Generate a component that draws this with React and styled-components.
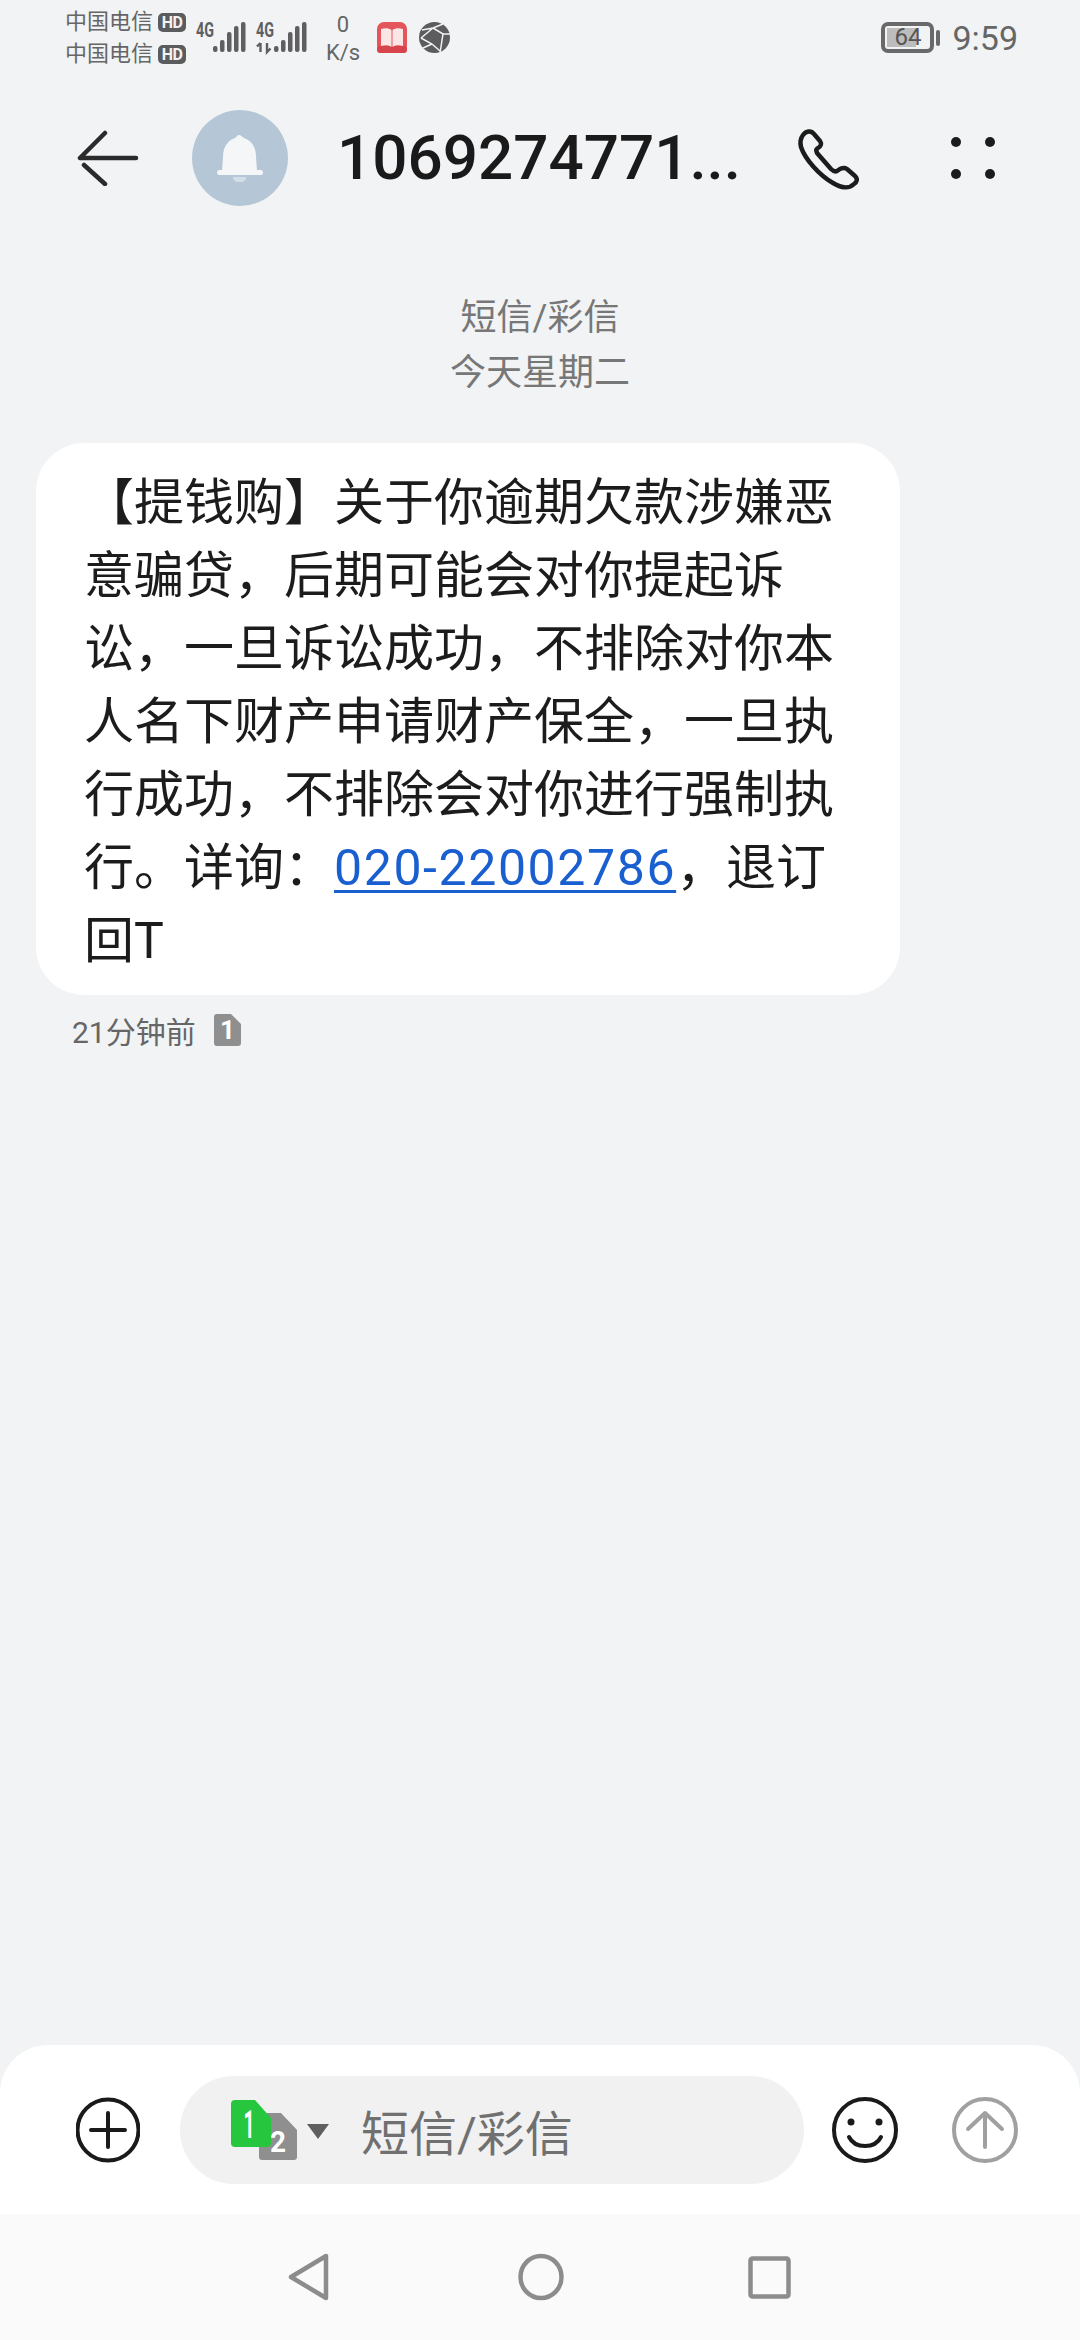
import React from 'react'
import styled, { createGlobalStyle } from 'styled-components'

const GlobalStyle = createGlobalStyle`
  html, body { margin: 0; padding: 0; background: #f1f3f5; }
  * { box-sizing: border-box; }
`

const Screen = styled.div`
  width: 1080px;
  height: 2340px;
  display: flex;
  flex-direction: column;
  background: #f1f3f5;
  font-family: Roboto, "Noto Sans CJK SC", sans-serif;
  overflow: hidden;
`

const StatusBar = styled.div`
  height: 76px;
  flex: none;
  display: flex;
  align-items: flex-start;
  padding-left: 65px;
  color: #666;
`

const Carriers = styled.div`
  width: 131px;
  padding-top: 6px;
  display: flex;
  flex-direction: column;
`

const CarrierRow = styled.div`
  height: 32px;
  display: flex;
  align-items: center;
  gap: 5px;
  font-size: 22px;
  line-height: 32px;
`

const HdBadge = styled.span`
  width: 28px;
  height: 19px;
  border-radius: 5px;
  background: #5c5c5e;
  color: #f1f3f5;
  font-size: 16px;
  line-height: 19px;
  font-weight: 700;
  text-align: center;
  letter-spacing: -0.5px;
`

const SignalSvg = styled.svg`
  flex: none;
  margin: 20px 0 0 ${p => p.$gap || 0}px;
  fill: #5f5f61;
`

const Speed = styled.div`
  width: 44px;
  margin-left: 13px;
  padding-top: 11px;
  display: flex;
  flex-direction: column;
  align-items: center;
  font-size: 22px;
  line-height: 28px;
`

const TrayIcon = styled.svg`
  flex: none;
  margin: 22px 0 0 12px;
`

const StatusRight = styled.div`
  margin-left: auto;
  margin-top: 22px;
  padding-right: 62px;
  height: 31px;
  display: flex;
  align-items: center;
`

const Battery = styled.div`
  position: relative;
  width: 53px;
  height: 31px;
  border: 4px solid #696969;
  border-radius: 7px;
`

const BatteryFill = styled.div`
  position: absolute;
  left: 2px;
  top: 2px;
  bottom: 2px;
  background: #bdbdbd;
`

const BatteryLabel = styled.span`
  position: absolute;
  inset: 0;
  text-align: center;
  font-size: 24px;
  line-height: 23px;
  color: #555;
`

const BatteryTip = styled.div`
  width: 4px;
  height: 16px;
  margin-left: 2px;
  border-radius: 2px;
  background: #696969;
`

const Clock = styled.span`
  margin-left: 12px;
  font-size: 34px;
  color: #666;
`

const Header = styled.div`
  height: 164px;
  flex: none;
  display: flex;
  align-items: center;
  padding-left: 76px;
`

const Avatar = styled.div`
  width: 96px;
  height: 96px;
  margin-left: 52px;
  border-radius: 50%;
  background: #b5c6d6;
`

const Title = styled.h1`
  width: 463px;
  margin: 0 0 0 49px;
  font-size: 62px;
  line-height: 70px;
  font-weight: 500;
  color: #1a1a1a;
  white-space: nowrap;
`

const HandsetSvg = styled.svg`
  margin-left: -19px;
  fill: none;
  stroke: #1c1c1c;
  stroke-width: 4.5;
  stroke-linejoin: round;
`

const HeaderDots = styled.svg`
  margin-left: 69px;
  fill: #1c1c1c;
`

const Meta = styled.div`
  flex: none;
  padding-top: 51px;
  text-align: center;
  font-size: 36px;
  line-height: 55px;
  color: #777;
`

const Bubble = styled.div`
  width: 864px;
  margin: 42px 0 0 36px;
  padding: 24px 64px 17px 48px;
  border-radius: 48px;
  background: #fff;
  font-size: 50px;
  line-height: 73px;
  color: #1c1c1c;
  text-spacing-trim: space-all;
`

const PhoneLink = styled.a`
  color: #1a5fd0;
  letter-spacing: 1.6px;
  text-decoration: underline;
  text-decoration-thickness: 3px;
  text-underline-offset: 5px;
`

const Stamp = styled.div`
  display: flex;
  align-items: center;
  gap: 18px;
  margin: 17px 0 0 72px;
  height: 36px;
  font-size: 30px;
  color: #666;
`

const Spacer = styled.div`
  flex: 1;
`

const Composer = styled.div`
  height: 169px;
  flex: none;
  display: flex;
  align-items: center;
  padding-left: 76px;
  border-radius: 48px 48px 0 0;
  background: #fff;
`

const InputPill = styled.div`
  width: 624px;
  height: 108px;
  margin: 0 28px 0 40px;
  padding-left: 51px;
  display: flex;
  align-items: center;
  border-radius: 54px;
  background: #f1f1f1;
`

const SimSvg = styled.svg`
  flex: none;
`

const Placeholder = styled.span`
  margin-left: 32px;
  font-size: 48px;
  color: #707070;
`

const RoundIcon = styled.svg`
  flex: none;
  margin-left: ${p => p.$gap || 0}px;
  fill: none;
  stroke: ${p => p.$color};
  stroke-width: 4;
  stroke-linecap: round;
  stroke-linejoin: round;
`

const NavBar = styled.div`
  height: 126px;
  flex: none;
  display: flex;
  align-items: center;
  padding-left: 288px;
  background: #fafafa;
`

const NavIcon = styled.svg`
  margin-left: ${p => p.$gap || 0}px;
  fill: none;
  stroke: #8c8c8c;
  stroke-width: 4.5;
  stroke-linejoin: round;
`

const SimSmall = () => (
  <SimSvg width="27" height="32" viewBox="0 0 27 32">
    <path d="M3 0H17L27 10V29a3 3 0 0 1-3 3H3a3 3 0 0 1-3-3V3a3 3 0 0 1 3-3Z" fill="#8f8f8f" />
    <text x="13.5" y="25" textAnchor="middle" fontSize="26" fontWeight="700" fontFamily="Roboto" fill="#fff">1</text>
  </SimSvg>
)

const Signal = ({ gap, bars, arrows }) => (
  <SignalSvg $gap={gap} width="52" height="36" viewBox="0 0 52 36">
    <text x="0" y="17" fontSize="21" fontWeight="700" fontFamily="Roboto" textLength="18" lengthAdjust="spacingAndGlyphs">4G</text>
    {arrows && (
      <path d="M4.5 32V23M1 26.5L4.5 23M11 23V32L14.5 28.5" stroke="#5f5f61" strokeWidth="2.4" fill="none" />
    )}
    {bars.map(([x, h]) => (
      <rect key={x} x={x} y={32 - h} width="4.5" height={h} rx="2" />
    ))}
  </SignalSvg>
)

const BookIcon = () => (
  <TrayIcon width="30" height="31" viewBox="0 0 30 31">
    <rect width="30" height="31" rx="7" fill="#e4555b" />
    <rect y="24" width="30" height="7" rx="3" fill="#d8444b" />
    <path d="M4 7C8 5.5 12 6 14.5 8V25C12 23 8 22.5 4 24Z" fill="#fbe6e6" />
    <path d="M26 7C22 5.5 18 6 15.5 8V25C18 23 22 22.5 26 24Z" fill="#fbe6e6" />
  </TrayIcon>
)

const GlobeIcon = () => (
  <TrayIcon width="31" height="31" viewBox="0 0 31 31">
    <circle cx="15.5" cy="15.5" r="15.5" fill="#5c5c5e" />
    <path d="M3 8L14 6L24 2M14 6L24 12L31 12M24 12L21 31M2 16L13 22L21 29M2 16L14 6M13 22L4 26" stroke="#f1f3f5" strokeWidth="1.5" fill="none" />
  </TrayIcon>
)

const BackArrow = () => (
  <svg width="64" height="56" viewBox="0 0 64 56" fill="none" stroke="#2b2b2b" strokeWidth="4.5" strokeLinecap="round">
    <path d="M4 28H60M4 28L29 3M8 35L29 54" />
  </svg>
)

const Bell = () => (
  <svg width="96" height="96" viewBox="0 0 96 96">
    <path d="M47 25C49 25 50 27 52 28C60 31 64 37 64 47L65 61H30L31 47C31 37 35 31 43 28C45 27 45 25 47 25Z" fill="#f5f6f8" />
    <rect x="25" y="60" width="46" height="5" rx="2.5" fill="#f5f6f8" />
    <path d="M41 67H54C54 71 51 72 47.5 72C44 72 41 71 41 67Z" fill="#d5dee7" />
  </svg>
)

const Handset = () => (
  <HandsetSvg width="100" height="85" viewBox="0 0 100 85">
    <path d="M22 19C25 15 30 14 33 18L39 25C41 28 40 30 37 32C35 33 35 35 36 37L50 53C52 55 54 56 56 55C60 52 63 51 66 53L74 60C77 63 76 66 73 68C68 73 60 72 52 67C38 59 24 43 20 31C19 27 19 23 22 19Z" />
  </HandsetSvg>
)

const SimPicker = () => (
  <SimSvg width="98" height="60" viewBox="0 0 98 60">
    <path d="M31 13H50L66 30V57a3 3 0 0 1-3 3H31a3 3 0 0 1-3-3V16a3 3 0 0 1 3-3Z" fill="#8f8f8f" />
    <text x="47" y="52" textAnchor="middle" fontSize="30" fontWeight="700" fontFamily="Roboto" fill="#fff" textLength="16" lengthAdjust="spacingAndGlyphs">2</text>
    <path d="M4 0H24L40 18V43a4 4 0 0 1-4 4H4a4 4 0 0 1-4-4V4a4 4 0 0 1 4-4Z" fill="#27c63f" />
    <text x="18" y="38" textAnchor="middle" fontSize="38" fontWeight="700" fontFamily="Roboto" fill="#fff" textLength="11" lengthAdjust="spacingAndGlyphs">1</text>
    <path d="M76 24H98L87 39Z" fill="#5f5f5f" />
  </SimSvg>
)

const batteryLevel = 64

export default function App() {
  return (
    <Screen>
      <GlobalStyle />
      <StatusBar>
        <Carriers>
          <CarrierRow>中国电信<HdBadge>HD</HdBadge></CarrierRow>
          <CarrierRow>中国电信<HdBadge>HD</HdBadge></CarrierRow>
        </Carriers>
        <Signal bars={[[17, 6], [24, 12], [31, 20], [38, 26], [45, 30]]} />
        <Signal gap={8} bars={[[18, 6], [25, 12], [32, 20], [39, 26], [46, 30]]} arrows />
        <Speed><span>0</span><span>K/s</span></Speed>
        <BookIcon />
        <GlobeIcon />
        <StatusRight>
          <Battery>
            <BatteryFill style={{ width: `${batteryLevel}%` }} />
            <BatteryLabel>{batteryLevel}</BatteryLabel>
          </Battery>
          <BatteryTip />
          <Clock>9:59</Clock>
        </StatusRight>
      </StatusBar>

      <Header>
        <BackArrow />
        <Avatar><Bell /></Avatar>
        <Title>1069274771...</Title>
        <Handset />
        <HeaderDots width="46" height="42" viewBox="0 0 46 42">
          <circle cx="6" cy="5" r="5" />
          <circle cx="40" cy="5" r="5" />
          <circle cx="6" cy="37" r="5" />
          <circle cx="40" cy="37" r="5" />
        </HeaderDots>
      </Header>

      <Meta>短信/彩信<br />今天星期二</Meta>

      <Bubble>
        【提钱购】关于你逾期欠款涉嫌恶意骗贷，后期可能会对你提起诉讼，一旦诉讼成功，不排除对你本人名下财产申请财产保全，一旦执行成功，不排除会对你进行强制执行。详询：<PhoneLink>020-22002786</PhoneLink>，退订回T
      </Bubble>

      <Stamp>21分钟前<SimSmall /></Stamp>

      <Spacer />

      <Composer>
        <RoundIcon $color="#1a1a1a" width="64" height="66" viewBox="-32 -33 64 66">
          <circle r="30.5" />
          <path d="M-17 0H17M0 -17V17" />
        </RoundIcon>
        <InputPill>
          <SimPicker />
          <Placeholder>短信/彩信</Placeholder>
        </InputPill>
        <RoundIcon $color="#1a1a1a" width="66" height="66" viewBox="-33 -33 66 66">
          <circle r="31" />
          <circle cx="-14" cy="-8" r="3.5" fill="#1a1a1a" stroke="none" />
          <circle cx="14" cy="-8" r="3.5" fill="#1a1a1a" stroke="none" />
          <path d="M-16 7C-10 19 10 19 16 7" />
        </RoundIcon>
        <RoundIcon $color="#a0a0a0" $gap={54} width="66" height="66" viewBox="-33 -33 66 66">
          <circle r="31" />
          <path d="M0 17V-17M-17 -1L0 -17L17 -1" />
        </RoundIcon>
      </Composer>

      <NavBar>
        <NavIcon width="41" height="48" viewBox="0 0 41 48">
          <path d="M38 3V45L3 24Z" />
        </NavIcon>
        <NavIcon $gap={189} width="46" height="48" viewBox="0 0 46 48">
          <ellipse cx="23" cy="24" rx="20.5" ry="21" />
        </NavIcon>
        <NavIcon $gap={184} width="43" height="43" viewBox="0 0 43 43">
          <rect x="2.5" y="2.5" width="38" height="38" rx="2" />
        </NavIcon>
      </NavBar>
    </Screen>
  )
}
